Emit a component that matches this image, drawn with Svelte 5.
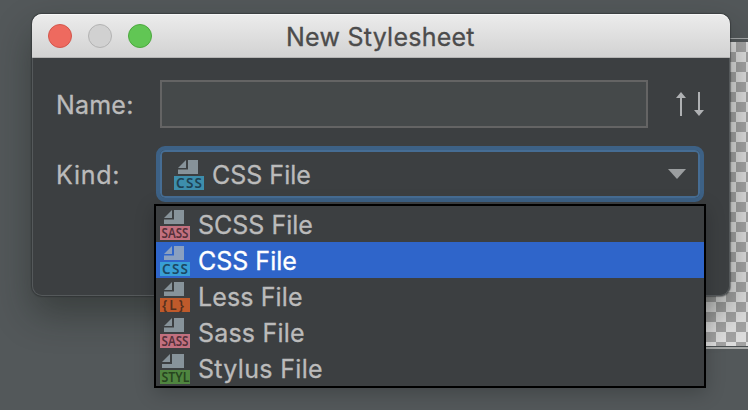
<script>
  const kinds = [
    { label: 'SCSS File', badge: 'SASS', color: '#c2707f', ink: '#55313a', spacing: 0 },
    { label: 'CSS File', badge: 'CSS', color: '#389fd6', ink: '#1c4863', spacing: 0, selected: true },
    { label: 'Less File', badge: '{L}', color: '#bf5a2b', ink: '#54301e', spacing: 0.12 },
    { label: 'Sass File', badge: 'SASS', color: '#c2707f', ink: '#55313a', spacing: 0.2 },
    { label: 'Stylus File', badge: 'STYL', color: '#4f853f', ink: '#27451f', spacing: 0.32, wide: true }
  ];
  const extents = { SASS: [1.5, 27], CSS: [2, 26], '{L}': [2, 22], STYL: [1.5, 28] };
</script>

{#snippet fileIcon(kind)}
  <svg class="file-icon" width="30" height="32" viewBox="0 0 30 32">
    <g fill={kind.selected ? '#8aa0c0' : '#87939a'}>
      {#if kind.wide}
        <path d="M10 2V10H2ZM12 2H24V18H2V12H12Z" />
      {:else}
        <path d="M12 2V10H4ZM14 2H24V16H4V11.6H14Z" />
      {/if}
    </g>
    <rect y="18" width="30" height="14" fill={kind.color} />
    {#if kind.wide}<path d="M2 16H24V18H2Z" fill="#3c3f41" />{/if}
    <text x={extents[kind.badge][0]} y="30" fill={kind.ink} textLength={extents[kind.badge][1]} lengthAdjust={kind.badge.length === 4 ? 'spacingAndGlyphs' : 'spacing'}>{kind.badge}</text>
  </svg>
{/snippet}

<main>
  <div class="canvas"></div>
  <section class="dialog">
    <header>
      <i class="light close"></i><i class="light minimize"></i><i class="light zoom"></i>
      <h1>New Stylesheet</h1>
    </header>
    <div class="form">
      <div class="row name-row">
        <span class="label name">Name:</span>
        <div class="input"></div>
        <svg class="arrows" width="28" height="24" viewBox="0 0 28 24" fill="#afb1b3">
          <path d="M4 24V6H0L5 0L10 6H6V24ZM22 0V18H18L23 24L28 18H24V0Z" />
        </svg>
      </div>
      <div class="row kind-row">
        <span class="label kind">Kind:</span>
        <div class="select">
          {@render fileIcon({ badge: 'CSS', color: '#3d8eac', ink: '#1d4253' })}
          <span class="text">CSS File</span>
          <svg class="chevron" width="18" height="10" viewBox="0 0 18 10"><path d="M0 0H18L9 10Z" fill="#9b9ea0" /></svg>
        </div>
      </div>
    </div>
  </section>
  <ul class="popup">
    {#each kinds as kind}
      <li class:selected={kind.selected}>
        {@render fileIcon(kind)}
        <span class="text" style="letter-spacing: {kind.spacing}px">{kind.label}</span>
      </li>
    {/each}
  </ul>
</main>

<style>
  :global(body) { margin: 0; }
  main {
    position: relative;
    width: 748px;
    height: 410px;
    overflow: hidden;
    background: #53585a;
    font-family: Inter, "Liberation Sans", sans-serif;
    font-size: 25px;
    color: #bbb;
    -webkit-text-stroke: .3px currentColor;
  }
  .canvas {
    position: absolute;
    left: 696px;
    top: 42px;
    width: 52px;
    height: 304px;
    background: repeating-conic-gradient(#a3a3a3 0 25%, #dedede 0 50%) 10px 0 / 20px 20px;
    box-shadow: 0 -3px #53585a, 0 -4px #a5a8a9, 0 1px #4b5052, 0 3px #a8aaa9;
  }
  .dialog {
    position: absolute;
    left: 32px;
    top: 14px;
    width: 698px;
    height: 282px;
    border-radius: 10px;
    background: #3c3f41;
    box-shadow: 0 0 1px 1px rgba(35, 38, 39, .45), 0 18px 36px rgba(25, 28, 24, .42);
  }
  .dialog::after {
    content: "";
    position: absolute;
    inset: 44px 0 0;
    border: 1px solid #55595b;
    border-top: 0;
    border-radius: 0 0 10px 10px;
  }
  header {
    display: flex;
    align-items: center;
    box-sizing: border-box;
    height: 44px;
    padding-left: 16px;
    border-radius: 10px 10px 0 0;
    border-bottom: 1px solid #b4b4b4;
    background: linear-gradient(#ececec, #d2d2d2);
    box-shadow: inset 0 1px #f7f7f7;
  }
  .light {
    box-sizing: border-box;
    width: 24px;
    height: 24px;
    margin-right: 16px;
    border: 1px solid;
    border-radius: 50%;
  }
  .close { background: #ee6a5f; border-color: #d3564c; }
  .minimize { background: #d1d1d1; border-color: #b3b3b3; }
  .zoom { background: #61c654; border-color: #4ca83e; }
  h1 {
    margin: 0 0 0 118px;
    padding-top: 2px;
    font-size: 25px;
    font-weight: 400;
    line-height: 42px;
    letter-spacing: .25px;
    color: #4c4c4c;
    white-space: nowrap;
  }
  .form { padding: 22px 26px 0 24px; }
  .row { display: flex; align-items: center; }
  .name-row { height: 48px; }
  .kind-row { height: 56px; margin-top: 18px; }
  .label { width: 104px; flex: none; padding-top: 2px; line-height: 46px; white-space: nowrap; }
  .name { letter-spacing: .2px; }
  .kind { width: 100px; letter-spacing: .75px; }
  .input {
    box-sizing: border-box;
    width: 488px;
    height: 48px;
    border: 2px solid #646464;
    background: #45494a;
  }
  .arrows { margin-left: 28px; }
  .select {
    display: flex;
    align-items: center;
    box-sizing: border-box;
    width: 548px;
    height: 56px;
    padding: 0 14px;
    border: 4px solid #3d6185;
    border-radius: 9px;
    box-shadow: inset 0 0 0 2px #466d94;
  }
  .file-icon { flex: none; overflow: visible; }
  .file-icon text {
    font: 600 13.5px "Noto Sans", "Open Sans", sans-serif;
    -webkit-text-stroke: 0;
  }
  .text { margin-left: 8px; padding-top: 2px; line-height: 34px; white-space: nowrap; }
  .chevron { margin-left: auto; }
  .popup {
    position: absolute;
    left: 154px;
    top: 204px;
    box-sizing: border-box;
    width: 552px;
    height: 184px;
    margin: 0;
    padding: 0;
    list-style: none;
    border: 2px solid #000;
    background: #3c3f41;
    box-shadow: 0 5px 18px rgba(0, 0, 0, .22);
  }
  li { display: flex; align-items: center; height: 36px; padding-left: 4px; }
  .selected { background: #2f65ca; color: #fff; }
</style>
